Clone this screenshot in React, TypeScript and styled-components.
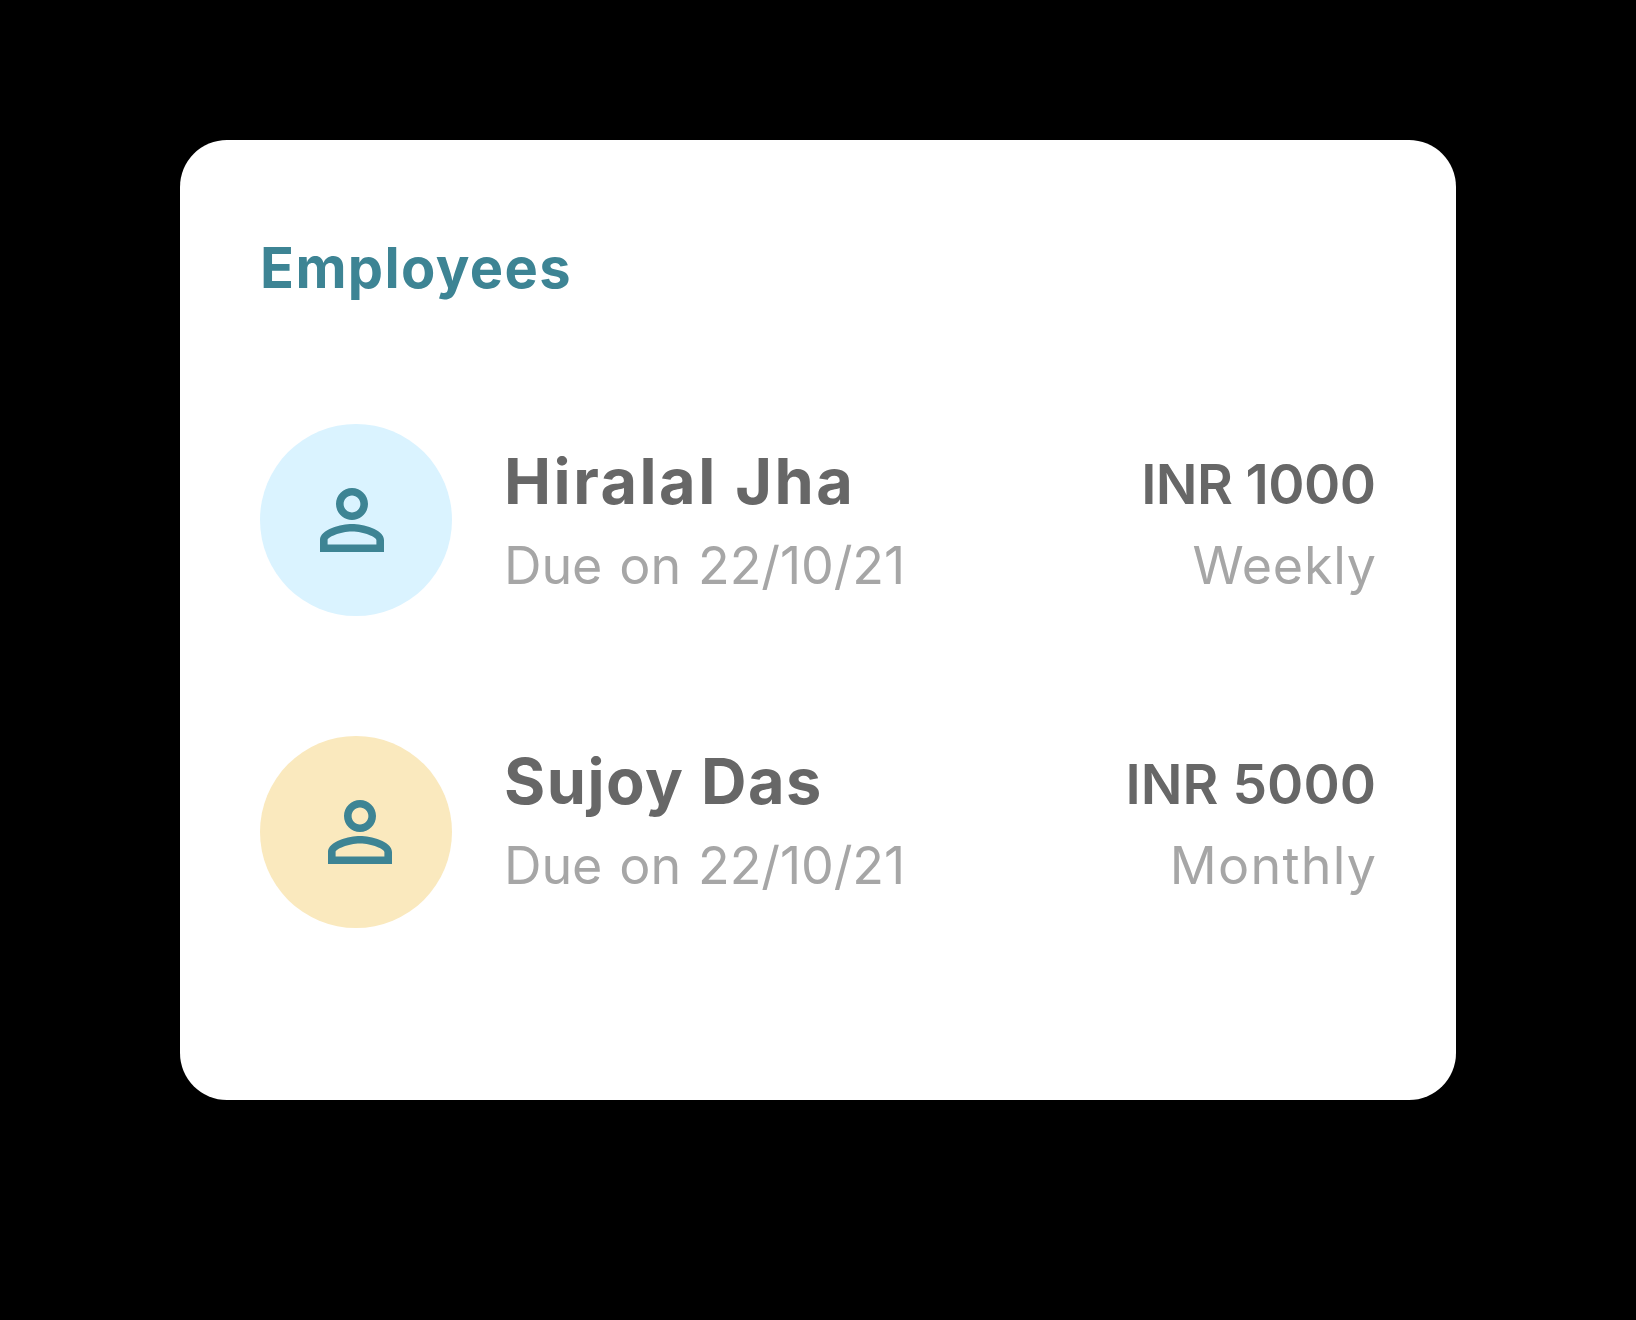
import React from "react";
import styled, { createGlobalStyle } from "styled-components";

const GlobalStyle = createGlobalStyle`
  * { box-sizing: border-box; }
  body { margin: 0; background: #000; font-family: Inter, "Open Sans", sans-serif; }
`;

const Page = styled.main`
  display: flex;
  justify-content: center;
  align-items: flex-start;
  width: 1636px;
  height: 1320px;
  padding-top: 140px;
  background: #000;
`;

const Card = styled.section`
  display: flex;
  flex-direction: column;
  width: 1276px;
  height: 960px;
  padding: 88px 80px;
  border-radius: 47px;
  background: #fff;
`;

const Title = styled.h1`
  margin: 0;
  font-size: 56px;
  font-weight: 700;
  line-height: 80px;
  letter-spacing: 1.36px;
  color: #3d8494;
`;

const List = styled.ul`
  display: flex;
  flex-direction: column;
  gap: 120px;
  margin: 116px 0 0;
  padding: 0;
  list-style: none;
`;

const Row = styled.li`
  display: flex;
  align-items: flex-start;
  gap: 52px;
  height: 192px;
`;

const Avatar = styled.div<{ $tint: string; $inset: number }>`
  display: flex;
  align-items: center;
  flex: none;
  width: 192px;
  height: 192px;
  padding-left: ${(p) => p.$inset}px;
  border-radius: 50%;
  background: ${(p) => p.$tint};
`;

const Details = styled.div<{ $shift: number }>`
  display: flex;
  flex: 1;
  justify-content: space-between;
  margin-top: ${(p) => p.$shift}px;
`;

const Column = styled.div<{ $end?: boolean }>`
  display: flex;
  flex-direction: column;
  align-items: ${(p) => (p.$end ? "flex-end" : "flex-start")};
  white-space: nowrap;
`;

const Text = styled.span<{ $tracking: number }>`
  letter-spacing: ${(p) => p.$tracking}px;
  margin-right: ${(p) => -p.$tracking}px;
`;

const Name = styled(Text)`
  font-size: 63px;
  font-weight: 700;
  line-height: 92px;
  color: #676767;
`;

const Amount = styled(Text)`
  font-size: 55px;
  font-weight: 600;
  line-height: 98px;
  color: #676767;
`;

const Due = styled(Text)`
  font-size: 52px;
  line-height: 77px;
  word-spacing: 2.5px;
  color: #a6a6a6;
`;

const Frequency = styled(Text)`
  font-size: 52px;
  line-height: 65px;
  color: #a6a6a6;
`;

const PersonIcon = () => (
  <svg width="64" height="64" viewBox="4 4 16 16" fill="#3d8494" aria-hidden="true">
    <path d="M12 5.9c1.16 0 2.1.94 2.1 2.1s-.94 2.1-2.1 2.1S9.9 9.16 9.9 8s.94-2.1 2.1-2.1m0 9c2.97 0 6.1 1.46 6.1 2.1v1.1H5.9V17c0-.64 3.13-2.1 6.1-2.1M12 4C9.79 4 8 5.79 8 8s1.79 4 4 4 4-1.79 4-4-1.79-4-4-4zm0 9c-2.67 0-8 1.34-8 4v3h16v-3c0-2.66-5.33-4-8-4z" />
  </svg>
);

const employees = [
  {
    name: "Hiralal Jha", nameTracking: 2.5,
    amount: "INR 1000", amountTracking: -0.57,
    frequency: "Weekly", frequencyTracking: 0.75,
    tint: "#daf3ff", inset: 60, shift: 11,
  },
  {
    name: "Sujoy Das", nameTracking: 1.5,
    amount: "INR 5000", amountTracking: 0.05,
    frequency: "Monthly", frequencyTracking: 1.25,
    tint: "#fae9be", inset: 68, shift: -1,
  },
];

export default function App() {
  return (
    <Page>
      <GlobalStyle />
      <Card>
        <Title>Employees</Title>
        <List>
          {employees.map((e) => (
            <Row key={e.name}>
              <Avatar $tint={e.tint} $inset={e.inset}>
                <PersonIcon />
              </Avatar>
              <Details $shift={e.shift}>
                <Column>
                  <Name $tracking={e.nameTracking}>{e.name}</Name>
                  <Due $tracking={-0.1}>Due on 22/10/21</Due>
                </Column>
                <Column $end>
                  <Amount $tracking={e.amountTracking}>{e.amount}</Amount>
                  <Frequency $tracking={e.frequencyTracking}>{e.frequency}</Frequency>
                </Column>
              </Details>
            </Row>
          ))}
        </List>
      </Card>
    </Page>
  );
}
